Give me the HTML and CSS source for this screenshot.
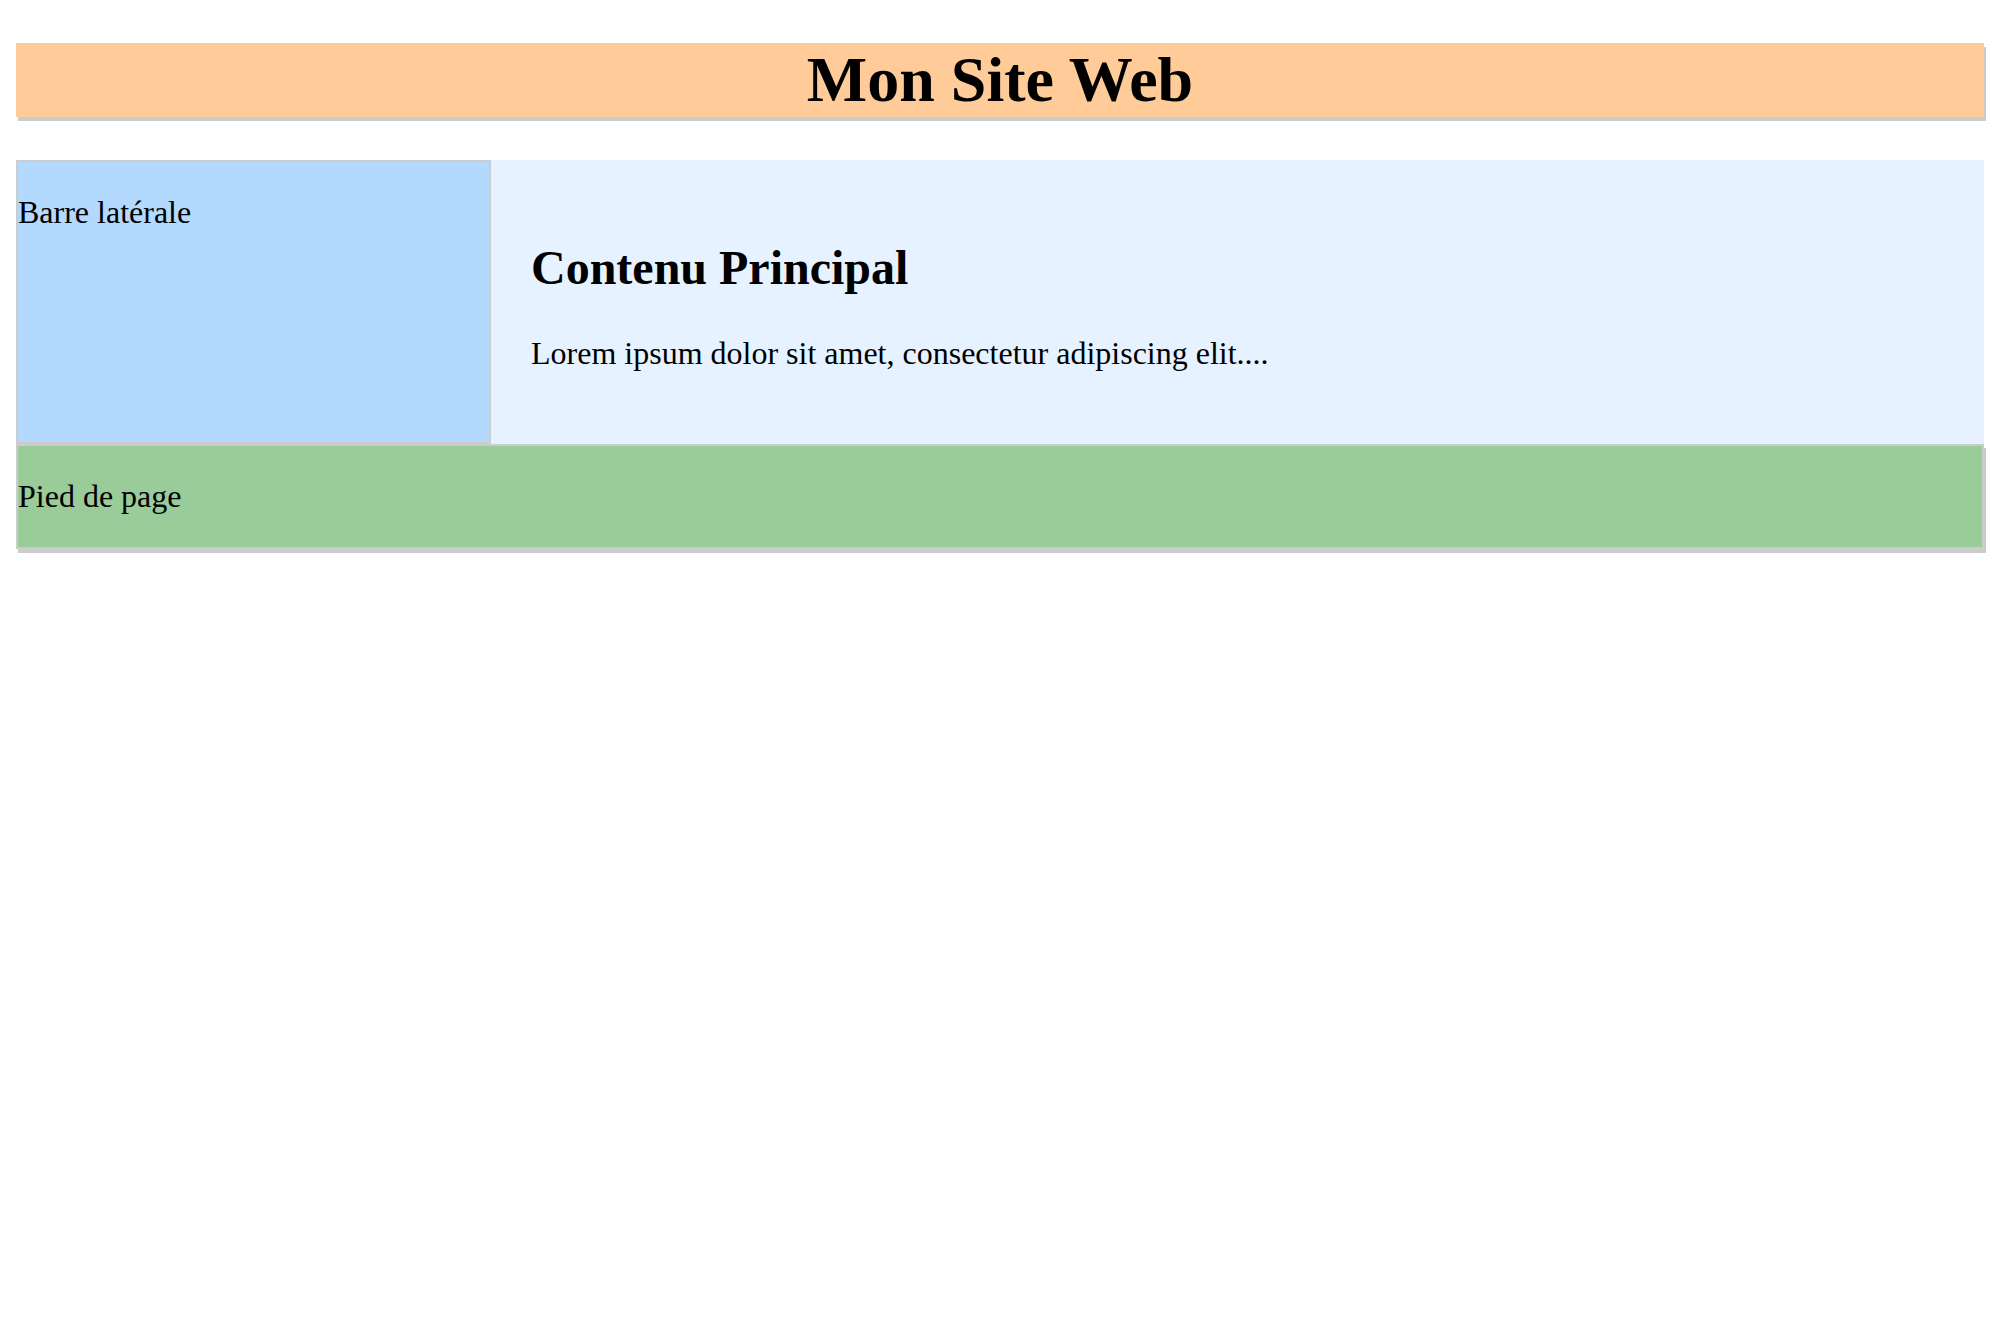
FILE: index.html
```html
<!DOCTYPE html>
<html lang="fr">
<head>
<meta charset="utf-8">
<title>Mon Site Web</title>
<link rel="stylesheet" href="styles.css">
</head>
<body>
<header class="site-header"><h1 class="site-title">Mon Site Web</h1></header>
<div class="layout">
  <aside class="sidebar"><p class="sidebar-text">Barre latérale</p></aside>
  <main class="content">
    <h2 class="content-title">Contenu Principal</h2>
    <p class="content-text">Lorem ipsum dolor sit amet, consectetur adipiscing elit....</p>
  </main>
</div>
<footer class="site-footer"><p class="footer-text">Pied de page</p></footer>
</body>
</html>
```

FILE: styles.css
```css
body {
  margin: 0;
  padding: 43px 16px 16px;
  font-family: "Liberation Serif", "Times New Roman", serif;
  font-size: 32px;
  color: #000;
  background: #fff;
}

.site-header {
  margin: 0 0 43px;
  background: #ffcc99;
  box-shadow: 2px 4px 0 #cccccc;
  text-align: center;
}

.site-title {
  margin: 0;
  font-size: 64px;
  font-weight: bold;
}

.layout {
  display: flex;
}

.sidebar {
  flex: 1;
  border: 2px solid #cccccc;
  background: #b3d9ff;
}

.sidebar-text {
  margin: 32px 0;
}

.content {
  flex: 3;
  padding: 40px;
  background: #e6f2ff;
}

.content-title {
  font-size: 48px;
  font-weight: bold;
  margin: 0.83em 0;
}

.content-text {
  margin: 32px 0;
}

.site-footer {
  border: 2px solid #cccccc;
  background: #99cc99;
  box-shadow: 2px 4px 0 #cccccc;
}

.footer-text {
  margin: 32px 0;
}
```
